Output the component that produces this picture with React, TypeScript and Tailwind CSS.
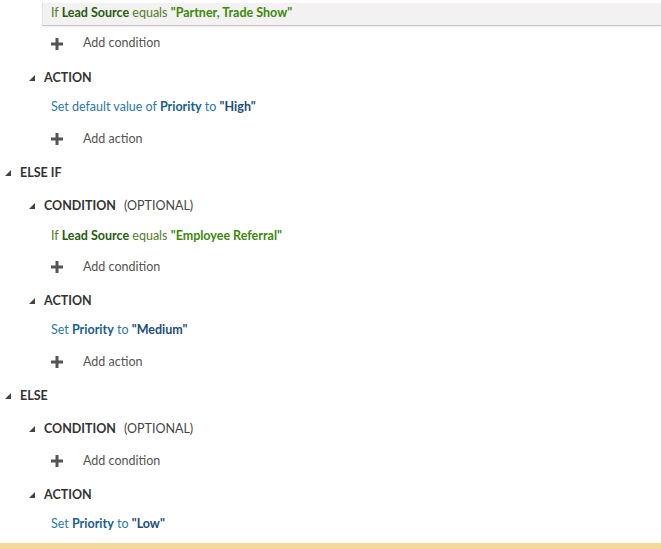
import React from "react";

const font = { fontFamily: 'Lato, "Open Sans", sans-serif' };

function Caret() {
  return (
    <svg width="6" height="6" viewBox="0 0 6 6" className="shrink-0">
      <polygon points="6,0 6,6 0,6" fill="#444" />
    </svg>
  );
}

function Plus() {
  return (
    <svg width="12" height="12" viewBox="0 0 12 12" className="shrink-0">
      <rect x="0" y="4.5" width="12" height="3" fill="#555" />
      <rect x="4.5" y="0" width="3" height="12" fill="#555" />
    </svg>
  );
}

function Header({ label, optional, level, h }: { label: string; optional?: boolean; level: 0 | 1; h: string }) {
  return (
    <div className={`flex items-center ${h} ${level === 0 ? "pl-[5px]" : "pl-[29px]"}`}>
      <Caret />
      <span className="ml-[9px] font-bold text-[#333]">{label}</span>
      {optional && <span className="ml-[8px] text-[#444]">(OPTIONAL)</span>}
    </div>
  );
}

function AddRow({ label, h }: { label: string; h: string }) {
  return (
    <div className={`flex items-center ${h} pl-[51px]`}>
      <Plus />
      <span className="ml-[20px] text-[#555]">{label}</span>
    </div>
  );
}

function Condition({ value }: { value: string }) {
  return (
    <span className="text-[#4f7d1f]">
      If <b className="text-[#255c0e]">Lead Source</b> equals <b className="text-[#3a8a0a]">"{value}"</b>
    </span>
  );
}

function Action({ prefix, value }: { prefix: string; value: string }) {
  return (
    <span className="text-[#2a78a8]">
      {prefix} <b className="text-[#17608e]">Priority</b> to <b className="text-[#1c4d78]">"{value}"</b>
    </span>
  );
}

export default function App() {
  return (
    <div className="w-[661px] h-[549px] bg-white text-[12.5px] overflow-hidden flex flex-col" style={font}>
      <div className="ml-[42px] mt-[3px] h-[23px] bg-[#f3f1f1] border-l border-l-[#e4e2e2] border-b border-b-[#c8c6c6] shadow-[0_1px_2px_rgba(0,0,0,0.08)] flex items-center pl-[8px] pb-[2px]">
        <Condition value="Partner, Trade Show" />
      </div>
      <AddRow label="Add condition" h="h-[35px]" />
      <Header label="ACTION" level={1} h="h-[34px]" />
      <div className="flex items-center h-[24px] pl-[51px]">
        <Action prefix="Set default value of" value="High" />
      </div>
      <AddRow label="Add action" h="h-[40px]" />

      <Header label="ELSE IF" level={0} h="h-[28px]" />
      <Header label="CONDITION" optional level={1} h="h-[38px]" />
      <div className="flex items-center h-[22px] pl-[51px]">
        <Condition value="Employee Referral" />
      </div>
      <AddRow label="Add condition" h="h-[40px]" />
      <Header label="ACTION" level={1} h="h-[28px]" />
      <div className="flex items-center h-[30px] pl-[51px]">
        <Action prefix="Set" value="Medium" />
      </div>
      <AddRow label="Add action" h="h-[34px]" />

      <Header label="ELSE" level={0} h="h-[34px]" />
      <Header label="CONDITION" optional level={1} h="h-[32px]" />
      <AddRow label="Add condition" h="h-[32px]" />
      <Header label="ACTION" level={1} h="h-[36px]" />
      <div className="flex items-center h-[22px] pl-[51px]">
        <Action prefix="Set" value="Low" />
      </div>
      <div className="h-[8px]" />
      <div className="h-[6px] bg-[#f5d89b]" />
    </div>
  );
}
